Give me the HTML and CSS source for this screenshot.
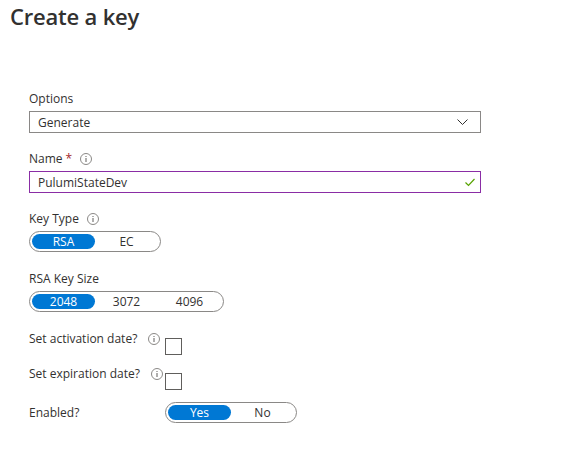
FILE: index.html
```html
<!DOCTYPE html>
<html lang="en">
<head>
<meta charset="utf-8">
<title>Create a key</title>
<link rel="stylesheet" href="styles.css">
</head>
<body>
<h1 class="title">Create a key</h1>
<form class="form">
  <div class="field">
    <div class="label">Options</div>
    <div class="select">
      <span>Generate</span>
      <svg class="chevron" width="11" height="6" viewBox="0 0 11 6"><path d="M0.5 0.5 L5.5 5.5 L10.5 0.5" fill="none" stroke="#323130" stroke-width="1"/></svg>
    </div>
  </div>
  <div class="field">
    <div class="label">Name <span class="req">*</span>
      <svg class="info" width="12" height="12" viewBox="0 0 12 12"><circle cx="6" cy="6" r="5.5" fill="none" stroke="#8a8886"/><rect x="5.5" y="5" width="1" height="4" fill="#605e5c"/><rect x="5.5" y="3" width="1" height="1" fill="#605e5c"/></svg>
    </div>
    <div class="input">
      <span>PulumiStateDev</span>
      <svg class="check" width="10" height="9" viewBox="0 0 10 9"><path d="M0.5 4.5 L3.5 7.5 L9.5 1" fill="none" stroke="#57a300" stroke-width="1.2"/></svg>
    </div>
  </div>
  <div class="field field-pill">
    <div class="label">Key Type
      <svg class="info" width="12" height="12" viewBox="0 0 12 12"><circle cx="6" cy="6" r="5.5" fill="none" stroke="#8a8886"/><rect x="5.5" y="5" width="1" height="4" fill="#605e5c"/><rect x="5.5" y="3" width="1" height="1" fill="#605e5c"/></svg>
    </div>
    <div class="pill">
      <span class="seg on">RSA</span><span class="seg">EC</span>
    </div>
  </div>
  <div class="field field-pill">
    <div class="label">RSA Key Size</div>
    <div class="pill">
      <span class="seg on">2048</span><span class="seg">3072</span><span class="seg">4096</span>
    </div>
  </div>
  <div class="row">
    <div class="rlabel">Set activation date?
      <svg class="info" width="12" height="12" viewBox="0 0 12 12"><circle cx="6" cy="6" r="5.5" fill="none" stroke="#8a8886"/><rect x="5.5" y="5" width="1" height="4" fill="#605e5c"/><rect x="5.5" y="3" width="1" height="1" fill="#605e5c"/></svg>
    </div>
    <span class="box"></span>
  </div>
  <div class="row">
    <div class="rlabel">Set expiration date?
      <svg class="info" width="12" height="12" viewBox="0 0 12 12"><circle cx="6" cy="6" r="5.5" fill="none" stroke="#8a8886"/><rect x="5.5" y="5" width="1" height="4" fill="#605e5c"/><rect x="5.5" y="3" width="1" height="1" fill="#605e5c"/></svg>
    </div>
    <span class="box"></span>
  </div>
  <div class="row row-enabled">
    <div class="rlabel">Enabled?</div>
    <div class="pill">
      <span class="seg on">Yes</span><span class="seg">No</span>
    </div>
  </div>
</form>
</body>
</html>
```

FILE: styles.css
```css
html, body {
  margin: 0;
  padding: 0;
  background: #ffffff;
}
body {
  font-family: "Open Sans", "Noto Sans", sans-serif;
  font-size: 12px;
  color: #323130;
}
.title {
  margin: 0;
  padding: 0 0 0 10px;
  font-size: 22px;
  font-weight: 600;
  line-height: 32px;
  letter-spacing: -0.2px;
  color: #323130;
}
.form {
  display: flex;
  flex-direction: column;
  padding: 57px 0 0 29px;
  width: 452px;
}
.field {
  display: flex;
  flex-direction: column;
  margin-bottom: 16px;
}
.field-pill {
  margin-bottom: 17px;
}
.label {
  display: flex;
  align-items: center;
  line-height: 20px;
  height: 20px;
  margin-bottom: 2px;
}
.req {
  color: #a4262c;
  margin-left: 3px;
}
.info {
  margin-left: 8px;
  flex: none;
}
.select, .input {
  box-sizing: border-box;
  height: 22px;
  width: 452px;
  border: 1px solid #8a8886;
  display: flex;
  align-items: center;
  justify-content: space-between;
  padding: 0 12px 0 8px;
}
.input {
  border-color: #8a2da5;
  padding-right: 5px;
}
.pill {
  box-sizing: border-box;
  height: 21px;
  border: 1px solid #8a8886;
  border-radius: 11px;
  display: inline-flex;
  align-items: center;
  padding: 0 2px;
  align-self: flex-start;
}
.seg {
  width: 63px;
  height: 15px;
  line-height: 15px;
  text-align: center;
  border-radius: 8px;
  color: #323130;
}
.seg.on {
  background: #0078d4;
  color: #ffffff;
}
.row {
  display: flex;
  align-items: flex-start;
  margin-bottom: 9px;
}
.rlabel {
  width: 136px;
  display: flex;
  align-items: center;
  line-height: 20px;
  height: 20px;
}
.rlabel .info {
  margin-left: 11px;
}
.box {
  box-sizing: border-box;
  width: 17px;
  height: 17px;
  border: 1px solid #605e5c;
  margin-top: 9px;
}
.row-enabled {
  margin-top: 3px;
  align-items: center;
}
```
